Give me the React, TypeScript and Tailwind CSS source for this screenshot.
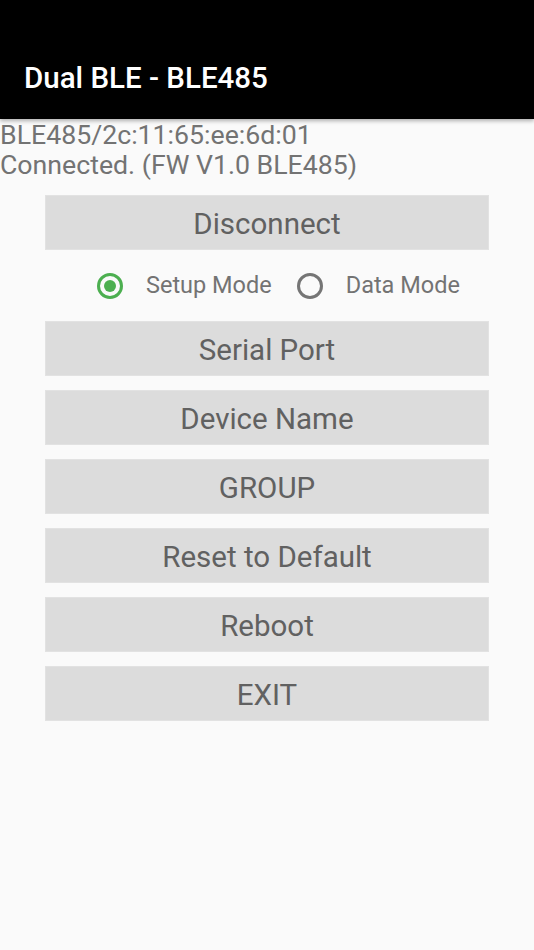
import React from "react";

const buttons = ["Serial Port", "Device Name", "GROUP", "Reset to Default", "Reboot", "EXIT"];

const Radio = ({ checked, label }: { checked: boolean; label: string }) => (
  <div className="flex items-center">
    <svg width="32" height="32" viewBox="0 0 32 32">
      <circle cx="16" cy="16" r="11.5" fill="none" stroke={checked ? "#4caf50" : "#757575"} strokeWidth="3" />
      {checked && <circle cx="16" cy="16" r="6" fill="#4caf50" />}
    </svg>
    <span className="ml-[20px] pt-[1px] text-[23.5px] text-[#737373]">{label}</span>
  </div>
);

const Btn = ({ text }: { text: string }) => (
  <div className="h-[55px] pt-[3px] bg-[#dcdcdc] border border-[#e2e2e2] flex items-center justify-center text-[29.5px] text-[#616161]">
    {text}
  </div>
);

export default function App() {
  return (
    <div className="w-[534px] h-[950px] bg-[#fafafa] font-['Roboto',sans-serif] flex flex-col">
      <div className="h-[119px] bg-black flex items-end pb-[26px] pl-[24px] shadow-[0_2px_4px_rgba(0,0,0,0.3)]">
        <span className="text-white text-[29.5px] font-medium leading-none">Dual BLE - BLE485</span>
      </div>
      <div className="pt-[1px] text-[26.7px] leading-[30px] text-[#737373]">
        <div>BLE485/2c:11:65:ee:6d:01</div>
        <div>Connected. (FW V1.0 BLE485)</div>
      </div>
      <div className="px-[45px] mt-[15px]">
        <Btn text="Disconnect" />
      </div>
      <div className="flex items-center pl-[94px] gap-[22px] h-[71px]">
        <Radio checked label="Setup Mode" />
        <Radio checked={false} label="Data Mode" />
      </div>
      <div className="px-[45px] flex flex-col gap-[14px]">
        {buttons.map((b) => (
          <Btn key={b} text={b} />
        ))}
      </div>
    </div>
  );
}
